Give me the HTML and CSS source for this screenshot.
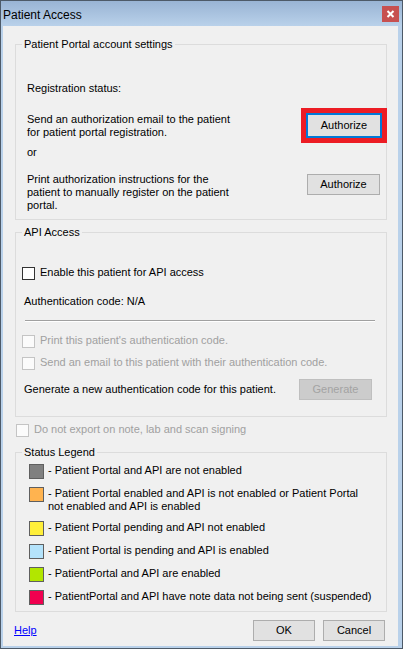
FILE: index.html
```html
<!DOCTYPE html>
<html>
<head>
    <title>Patient Access</title>
    <link rel="stylesheet" href="styles.css">
</head>
<body>
    <div class="window">
        <div class="titlebar">
            <span class="title">Patient Access</span>
            <span class="close">
                <svg width="17" height="16" viewBox="0 0 17 16">
                    <path d="M5.5 5 L11.5 11 M11.5 5 L5.5 11" stroke="#fff" stroke-width="2" fill="none"/>
                </svg>
            </span>
        </div>

        <div class="client">
            <fieldset class="group">
                <legend>Patient Portal account settings</legend>
                <div class="portal-body">
                    <p class="status">Registration status:</p>
                    <div class="action first">
                        <p>Send an authorization email to the patient<br>for patient portal registration.</p>
                        <button class="btn focused">Authorize</button>
                    </div>
                    <p class="or">or</p>
                    <div class="action second">
                        <p>Print authorization instructions for the<br>patient to manually register on the patient<br>portal.</p>
                        <button class="btn">Authorize</button>
                    </div>
                </div>
            </fieldset>

            <fieldset class="group api">
                <legend>API Access</legend>
                <div class="api-body">
                    <label class="check enable">
                        <input type="checkbox">
                        <span>Enable this patient for API access</span>
                    </label>
                    <p class="auth-code">Authentication code: N/A</p>
                    <div class="separator"></div>
                    <label class="check disabled print">
                        <input type="checkbox" disabled>
                        <span>Print this patient's authentication code.</span>
                    </label>
                    <label class="check disabled email">
                        <input type="checkbox" disabled>
                        <span>Send an email to this patient with their authentication code.</span>
                    </label>
                    <div class="generate">
                        <p>Generate a new authentication code for this patient.</p>
                        <button class="btn" disabled>Generate</button>
                    </div>
                </div>
            </fieldset>

            <label class="check disabled no-export">
                <input type="checkbox" disabled>
                <span>Do not export on note, lab and scan signing</span>
            </label>

            <fieldset class="group legend-group">
                <legend>Status Legend</legend>
                <div class="legend-body">
                    <div class="legend-row">
                        <span class="swatch gray"></span>
                        <p>- Patient Portal and API are not enabled</p>
                    </div>
                    <div class="legend-row">
                        <span class="swatch orange"></span>
                        <p>- Patient Portal enabled and API is not enabled or Patient Portal<br>not enabled and API is enabled</p>
                    </div>
                    <div class="legend-row">
                        <span class="swatch yellow"></span>
                        <p>- Patient Portal pending and API not enabled</p>
                    </div>
                    <div class="legend-row">
                        <span class="swatch blue"></span>
                        <p>- Patient Portal is pending and API is enabled</p>
                    </div>
                    <div class="legend-row">
                        <span class="swatch green"></span>
                        <p>- PatientPortal and API are enabled</p>
                    </div>
                    <div class="legend-row">
                        <span class="swatch red"></span>
                        <p>- PatientPortal and API have note data not being sent (suspended)</p>
                    </div>
                </div>
            </fieldset>

            <div class="footer">
                <a class="help" href="#">Help</a>
                <button class="btn wide">OK</button>
                <button class="btn wide">Cancel</button>
            </div>
        </div>
    </div>
</body>
</html>
```

FILE: styles.css
```css
body {
    margin: 0;
    font-family: "Liberation Sans", Arial, sans-serif;
    font-size: 11px;
    line-height: 13px;
    color: #000;
}

p {
    margin: 0;
}

.window {
    width: 403px;
    height: 649px;
    box-sizing: border-box;
    border: 1px solid #4d5a68;
    background-color: #b9d1ea;
    display: flex;
    flex-direction: column;
}

.titlebar {
    height: 25px;
    flex: none;
    display: flex;
    align-items: flex-start;
    justify-content: space-between;
    background: linear-gradient(#99b4d4, #b9d1ea);
    padding-left: 2px;
}

.title {
    font-size: 12px;
    line-height: 15px;
    margin-top: 7px;
}

.close {
    width: 17px;
    height: 16px;
    margin-top: 5px;
    margin-right: 3px;
    background-color: #c75050;
}

.close svg {
    display: block;
}

.client {
    flex: 1;
    margin: 0 4px 2px 2px;
    padding: 12px 11px 0 12px;
    background-color: #f0f0f0;
}

.group {
    margin: 0;
    padding: 0;
    border: 1px solid #dcdcdc;
    min-width: 0;
}

.group legend {
    margin-left: 6px;
    padding: 0 2px;
    line-height: 13px;
}

.portal-body {
    padding: 31px 4px 7px 11px;
}

.action {
    display: flex;
    justify-content: space-between;
    align-items: flex-start;
}

.action.first {
    margin-top: 18px;
}

.or {
    margin-top: 7px;
}

.action.second {
    margin-top: 14px;
}

.btn {
    font: inherit;
    line-height: 13px;
    color: #000;
    padding: 0;
    box-sizing: border-box;
    width: 73px;
    height: 21px;
    border: 1px solid #adadad;
    background-color: #e1e1e1;
}

.action.second .btn {
    margin-top: 1px;
    margin-right: 2px;
}

.btn.focused {
    width: 76px;
    height: 25px;
    border: 2px solid #0078d7;
    outline: 5px solid #ec1c24;
}

.btn:disabled {
    background-color: #cccccc;
    border-color: #bfbfbf;
    color: #a3a3a3;
}

.api {
    margin-top: 6px;
}

.api-body {
    padding: 0 4px 16px 0;
}

.check {
    display: flex;
    align-items: flex-start;
}

.check input {
    appearance: none;
    -webkit-appearance: none;
    width: 13px;
    height: 13px;
    margin: 1px 5px 0 0;
    border: 1px solid #333;
    background-color: #fff;
}

.check.disabled {
    color: #a0a0a0;
}

.check.disabled input {
    border-color: #c4c4c4;
    background-color: #fbfbfb;
}

.api .check {
    margin-left: 6px;
}

.check.enable {
    margin-top: 27px;
}

.auth-code {
    margin: 15px 0 0 8px;
}

.separator {
    margin: 12px 0 0 9px;
    width: 350px;
    border-top: 1px solid #a0a0a0;
    border-bottom: 1px solid #fff;
}

.check.print {
    margin-top: 12px;
}

.check.email {
    margin-top: 8px;
}

.generate {
    margin: 9px 0 0 8px;
    display: flex;
    align-items: center;
    justify-content: space-between;
}

.generate .btn {
    margin-right: 10px;
}

.no-export {
    margin: 6px 0 0 1px;
}

.legend-group {
    margin-top: 9px;
}

.legend-body {
    padding: 5px 4px 6px 13px;
    display: flex;
    flex-direction: column;
    gap: 8px;
}

.legend-row {
    display: flex;
    align-items: flex-start;
}

.legend-row p {
    margin-left: 4px;
}

.swatch {
    flex: none;
    width: 15px;
    height: 15px;
    box-sizing: border-box;
    border: 1px solid #5f5f5f;
}

.swatch.gray { background-color: #808080; }
.swatch.orange { background-color: #ffb34f; }
.swatch.yellow { background-color: #ffef3a; }
.swatch.blue { background-color: #b4e3fb; }
.swatch.green { background-color: #b2e600; }
.swatch.red { background-color: #f0004f; }

.footer {
    margin-top: 8px;
    display: flex;
    align-items: center;
}

.help {
    color: #0000ff;
    margin-left: -1px;
    margin-right: auto;
}

.btn.wide {
    width: 62px;
}

.footer .btn + .btn {
    margin-left: 8px;
    margin-right: 2px;
}
```
